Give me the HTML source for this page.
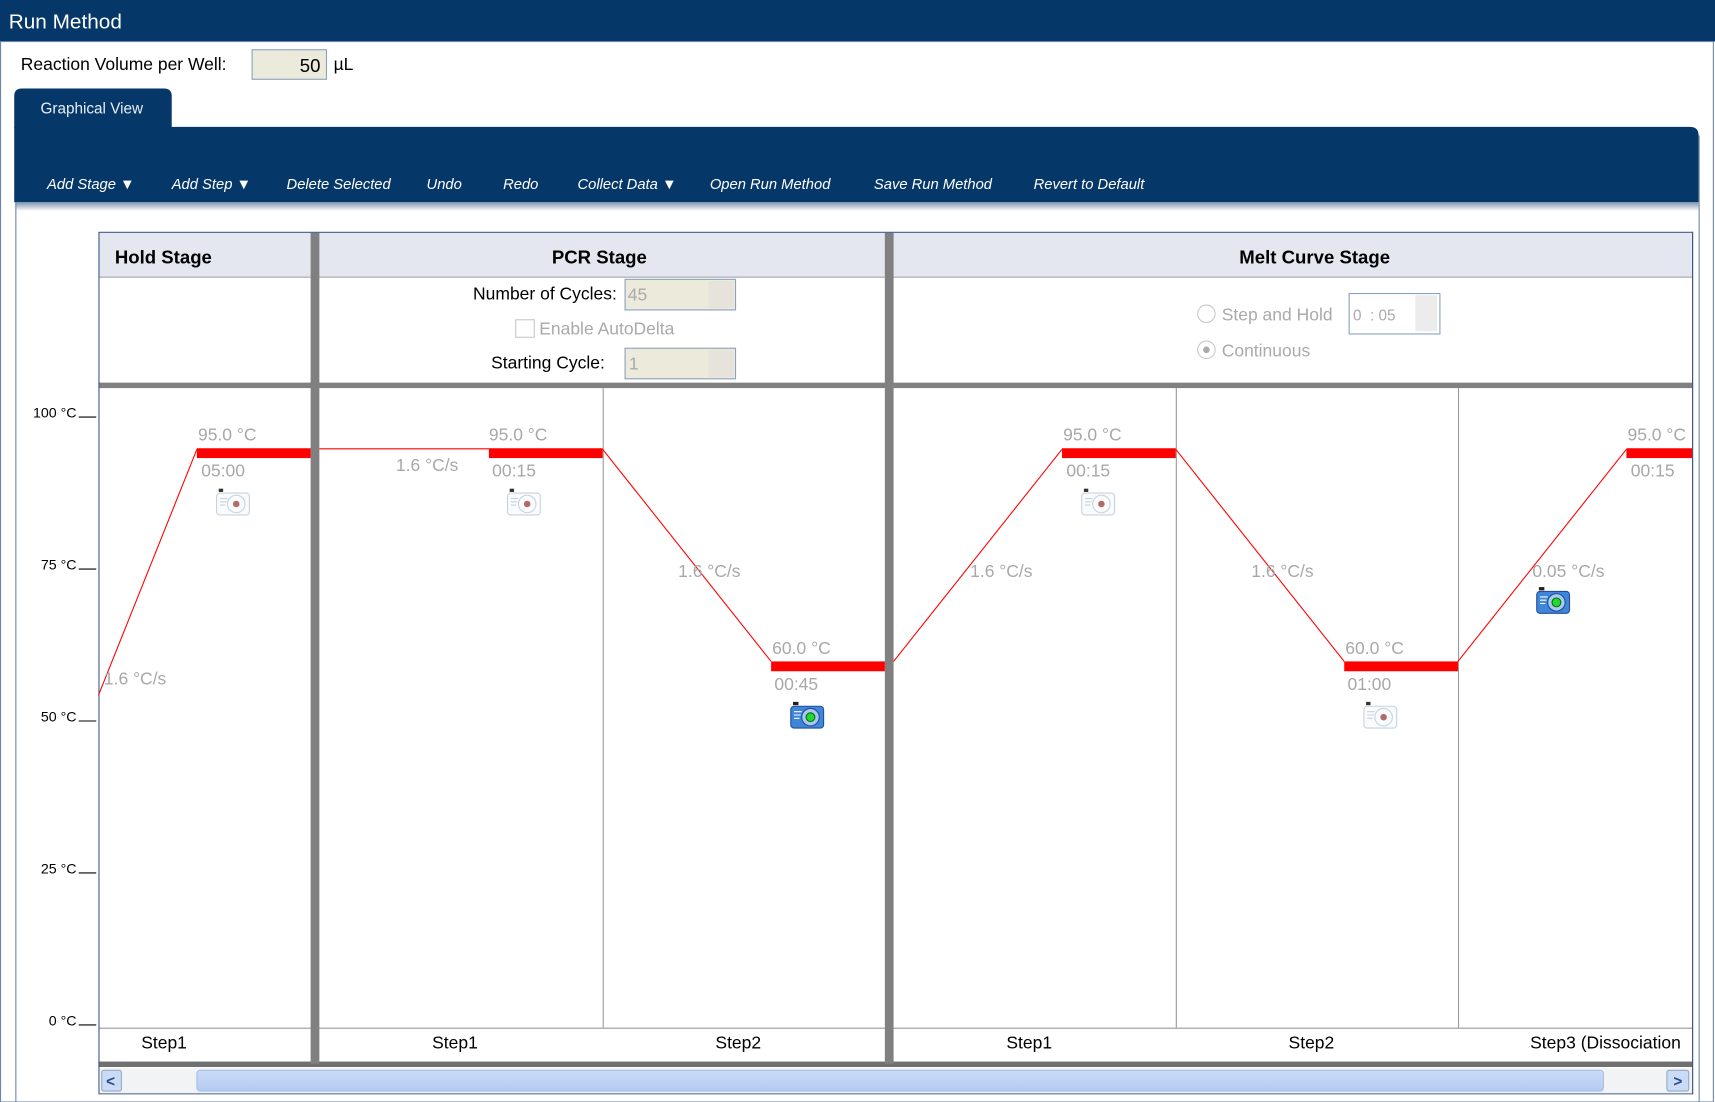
<!DOCTYPE html>
<html><head><meta charset="utf-8"><style>
html,body{margin:0;padding:0;background:#fff;overflow:hidden}
svg{display:block}
text{font-family:"Liberation Sans",sans-serif}
</style></head><body>
<svg width="1715" height="1102" viewBox="0 0 1568 1008" preserveAspectRatio="none" xmlns="http://www.w3.org/2000/svg">
<defs>
<clipPath id="cp"><rect x="0" y="0" width="1547" height="1008"/></clipPath>
<linearGradient id="sh" x1="0" y1="0" x2="0" y2="1"><stop offset="0" stop-color="#7f93b0"/><stop offset="1" stop-color="#ffffff"/></linearGradient>
<linearGradient id="sb" x1="0" y1="0" x2="0" y2="1"><stop offset="0" stop-color="#c9dbf7"/><stop offset="1" stop-color="#b4cbf2"/></linearGradient>
<g id="camg">
<rect x="1" y="5" width="30" height="20" rx="3" fill="#fafbfd" stroke="#c8d2de"/>
<rect x="3" y="1" width="4" height="3" fill="#333"/>
<circle cx="19" cy="15" r="8" fill="none" stroke="#c8d2de"/>
<circle cx="19" cy="15" r="3" fill="#b46a6a"/>
<path d="M4 10h7M4 13h6M4 16h5" stroke="#c8d2de"/>
</g>
<g id="camb">
<rect x="1" y="5" width="30" height="20" rx="3" fill="#3f86d8" stroke="#1f4f9a"/>
<rect x="3" y="1" width="5" height="3" fill="#222"/>
<circle cx="19" cy="15" r="8" fill="#a8c8f0" stroke="#1f4f9a"/>
<circle cx="19" cy="15" r="4" fill="#1fdc2a" stroke="#0a6a12"/>
<path d="M4 10h7M4 13h6M4 16h5" stroke="#fff"/>
</g>
</defs>
<rect x="0" y="0" width="1568" height="38" fill="#053768"/>
<text x="8" y="26" font-size="19" fill="#fff">Run Method</text>
<rect x="0.5" y="38" width="1566" height="970" fill="none" stroke="#6d86a8"/>
<text x="19" y="64" font-size="16" fill="#000">Reaction Volume per Well:</text>
<rect x="230.5" y="45.5" width="68" height="27" fill="#eceadb" stroke="#8aa0bd"/>
<text x="293" y="66" font-size="17" text-anchor="end">50</text>
<text x="305" y="64" font-size="16">µL</text>
<path d="M13 117V88q0-7 7-7h130q7 0 7 7v29z" fill="#053768"/>
<text x="37" y="104" font-size="14" fill="#e8eef6">Graphical View</text>
<path d="M13 116H1545q8 0 8 8V185H13z" fill="#053768"/>
<rect x="14" y="185" width="1539" height="8" fill="url(#sh)"/>
<line x1="14.5" y1="185" x2="14.5" y2="1008" stroke="#6d86a8"/>
<line x1="1553.5" y1="124" x2="1553.5" y2="1008" stroke="#6d86a8"/>
<g font-size="13.5" fill="#fff" font-style="italic">
<text x="43" y="173">Add Stage ▼</text>
<text x="157" y="173">Add Step ▼</text>
<text x="262" y="173">Delete Selected</text>
<text x="390" y="173">Undo</text>
<text x="460" y="173">Redo</text>
<text x="528" y="173">Collect Data ▼</text>
<text x="649" y="173">Open Run Method</text>
<text x="799" y="173">Save Run Method</text>
<text x="945" y="173">Revert to Default</text>
</g>
<rect x="90" y="213" width="1457" height="40" fill="#e4e6f0"/>
<line x1="90" y1="253.5" x2="1547" y2="253.5" stroke="#999"/>
<rect x="90" y="350" width="1457" height="5" fill="#808080"/>
<line x1="90" y1="940.5" x2="1547" y2="940.5" stroke="#999"/>
<rect x="90" y="971" width="1457" height="5" fill="#707070"/>
<rect x="284" y="213" width="8" height="760" fill="#808080"/>
<rect x="809" y="213" width="8" height="760" fill="#808080"/>
<g stroke="#999"><line x1="551.5" y1="355" x2="551.5" y2="940"/><line x1="1075.5" y1="355" x2="1075.5" y2="940"/><line x1="1333.5" y1="355" x2="1333.5" y2="940"/></g>
<rect x="90.5" y="212.5" width="1457" height="788" fill="none" stroke="#3b5a86"/>
<g font-size="17" font-weight="bold" fill="#000">
<text x="105" y="241">Hold Stage</text>
<text x="548" y="241" text-anchor="middle">PCR Stage</text>
<text x="1202" y="241" text-anchor="middle">Melt Curve Stage</text>
</g>
<g font-size="16">
<text x="564" y="274" text-anchor="end">Number of Cycles:</text>
<text x="553" y="337" text-anchor="end">Starting Cycle:</text>
</g>
<rect x="571.5" y="255.5" width="101" height="28" fill="#eceadb" stroke="#8aa0bd"/>
<rect x="648" y="257" width="23" height="25" fill="#e6e4da"/>
<text x="574" y="275" font-size="16" fill="#aaa">45</text>
<rect x="571.5" y="318.5" width="101" height="28" fill="#eceadb" stroke="#8aa0bd"/>
<rect x="648" y="320" width="23" height="25" fill="#e6e4da"/>
<text x="575" y="338" font-size="16" fill="#aaa">1</text>
<rect x="471.5" y="292.5" width="17" height="16" fill="#fff" stroke="#c8c8c8"/>
<text x="493" y="306" font-size="16" fill="#aaa">Enable AutoDelta</text>
<circle cx="1103" cy="287" r="8" fill="#fff" stroke="#c8c8c8"/>
<text x="1117" y="293" font-size="16" fill="#aaa">Step and Hold</text>
<rect x="1233.5" y="268.5" width="83" height="37" fill="#fff" stroke="#8aa0bd"/>
<rect x="1294" y="270" width="20" height="33" fill="#ececec"/>
<text x="1237" y="293" font-size="14" fill="#aaa">0 &#160;: 05</text>
<circle cx="1103" cy="320" r="8" fill="#fff" stroke="#c8c8c8"/>
<circle cx="1103" cy="320" r="3" fill="#aaa"/>
<text x="1117" y="326" font-size="16" fill="#aaa">Continuous</text>
<g font-size="13" fill="#000" text-anchor="end">
<text x="70" y="382">100 °C</text><text x="70" y="521">75 °C</text><text x="70" y="660">50 °C</text><text x="70" y="799">25 °C</text><text x="70" y="938">0 °C</text>
</g>
<g stroke="#000"><path d="M72 381.5h16M72 520.5h16M72 659.5h16M72 798.5h16M72 937.5h16"/></g>
<g clip-path="url(#cp)">
<path d="M90 636L180 411M292 410.5H447M551 411L705 605M817 605L971 411M1075 411L1229 605M1333 605L1487 411" stroke="#f00" stroke-width="1" fill="none"/>
<g fill="#f00"><rect x="180" y="410" width="104" height="9"/><rect x="447" y="410" width="104" height="9"/><rect x="705" y="605" width="104" height="9"/><rect x="971" y="410" width="104" height="9"/><rect x="1229" y="605" width="104" height="9"/><rect x="1487" y="410" width="60" height="9"/></g>
<g font-size="16" fill="#a8a8a8">
<text x="181" y="403">95.0 °C</text><text x="184" y="436">05:00</text><text x="95" y="626">1.6 °C/s</text>
<text x="447" y="403">95.0 °C</text><text x="450" y="436">00:15</text><text x="362" y="431">1.6 °C/s</text>
<text x="620" y="528">1.6 °C/s</text><text x="706" y="598">60.0 °C</text><text x="708" y="631">00:45</text>
<text x="972" y="403">95.0 °C</text><text x="975" y="436">00:15</text><text x="887" y="528">1.6 °C/s</text>
<text x="1144" y="528">1.6 °C/s</text><text x="1230" y="598">60.0 °C</text><text x="1232" y="631">01:00</text>
<text x="1488" y="403">95.0 °C</text><text x="1491" y="436">00:15</text><text x="1401" y="528">0.05 °C/s</text>
</g>
<use href="#camg" x="197" y="446"/><use href="#camg" x="463" y="446"/><use href="#camg" x="988" y="446"/><use href="#camg" x="1246" y="641"/>
<use href="#camb" x="722" y="641"/><use href="#camb" x="1404" y="536"/>
<g font-size="16" fill="#000" text-anchor="middle">
<text x="150" y="959">Step1</text><text x="416" y="959">Step1</text><text x="675" y="959">Step2</text>
<text x="941" y="959">Step1</text><text x="1199" y="959">Step2</text><text x="1399" y="959" text-anchor="start">Step3 (Dissociation</text>
</g>
</g>
<line x1="1547.5" y1="212" x2="1547.5" y2="1001" stroke="#3b5a86"/>
<rect x="91" y="977" width="1456" height="23" fill="#f2f3f5"/>
<rect x="93" y="979" width="18" height="19" rx="2" fill="#c9dbf7" stroke="#9ab"/>
<text x="97" y="994" font-size="14" fill="#2a4a8a" font-weight="bold">&lt;</text>
<rect x="180" y="979" width="1286" height="19" rx="3" fill="url(#sb)" stroke="#a8c0e6"/>
<rect x="1524" y="979" width="20" height="19" rx="2" fill="#c9dbf7" stroke="#9ab"/>
<text x="1530" y="994" font-size="14" fill="#2a4a8a" font-weight="bold">&gt;</text>
</svg>
</body></html>
